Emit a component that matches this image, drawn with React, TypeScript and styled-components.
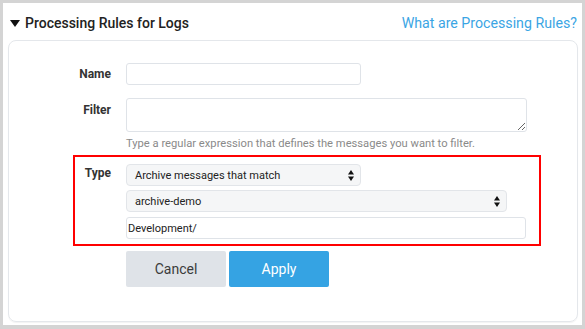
import React from 'react';
import styled, { createGlobalStyle } from 'styled-components';

// processing rules panel

const GlobalStyle = createGlobalStyle`
	html, body {
		margin: 0;
		padding: 0;
		background: #d4d4d4;
		font-family: Roboto, "Liberation Sans", Arial, sans-serif;
	}
`;

const Arrows = () => (
	<svg width="6" height="11" viewBox="0 0 6 11">
		<path d="M3 0 L6 4.5 L0 4.5 Z" fill="#111" />
		<path d="M0 6.5 L6 6.5 L3 11 Z" fill="#111" />
	</svg>
);

const App = () => {
	return (
		<React.Fragment>
			<GlobalStyle />
			<Panel>
				<Header>
					<Title>
						<Caret />
						Processing Rules for Logs
					</Title>
					<HelpLink href="#">What are Processing Rules?</HelpLink>
				</Header>
				<Card>
					<Row>
						<Label $top={1}>Name</Label>
						<TextInput $width={235} type="text" />
					</Row>
					<Row $gap={4}>
						<Label $top={2}>Filter</Label>
						<div>
							<TextArea />
							<Hint>Type a regular expression that defines the messages you want to filter.</Hint>
						</div>
					</Row>
					<Highlight>
						<Row $gap={0} $inset={0}>
							<Label $top={-1}>Type</Label>
							<Stack>
								<SelectBox $width={235}>
									<span>Archive messages that match</span>
									<Arrows />
								</SelectBox>
								<SelectBox $width={381}>
									<span>archive-demo</span>
									<Arrows />
								</SelectBox>
								<TextInput $width={400} $mt={1} type="text" defaultValue="Development/" />
							</Stack>
						</Row>
					</Highlight>
					<Buttons>
						<Button type="button">Cancel</Button>
						<Button type="button" $primary>
							Apply
						</Button>
					</Buttons>
				</Card>
			</Panel>
		</React.Fragment>
	);
};

export default App;

const Panel = styled.div`
	margin: 3px;
	width: 579px;
	height: 322px;
	box-sizing: border-box;
	background: #fff;
	padding: 0 4px 3px 5px;
	display: flex;
	flex-direction: column;
`;

const Header = styled.div`
	height: 37px;
	display: flex;
	align-items: center;
	justify-content: space-between;
	padding: 2px 0 0 2px;
	box-sizing: border-box;
`;

const Title = styled.div`
	display: flex;
	align-items: center;
	gap: 5px;
	font-size: 14px;
	font-weight: 500;
	color: #222;
`;

const Caret = styled.span`
	width: 0;
	height: 0;
	border-left: 5.5px solid transparent;
	border-right: 5.5px solid transparent;
	border-top: 7px solid #111;
	margin-top: 1px;
`;

const HelpLink = styled.a`
	font-size: 14.2px;
	color: #3aa5e4;
	text-decoration: none;
	margin-right: 1px;
`;

const Card = styled.div`
	flex: 1;
	border: 1px solid #e4e7eb;
	border-radius: 8px;
	box-shadow: 0 1px 1px rgba(0, 0, 0, 0.05);
	padding: 22px 0 0 66px;
	display: flex;
	flex-direction: column;
`;

const Row = styled.div<{ $gap?: number; $inset?: number }>`
	display: grid;
	grid-template-columns: 34px 1fr;
	column-gap: 15px;
	align-items: start;
	padding-left: ${(p) => (p.$inset ?? 2)}px;
	margin-bottom: ${(p) => (p.$gap ?? 13)}px;
`;

const Label = styled.label<{ $top: number }>`
	font-size: 12px;
	font-weight: 700;
	color: #333;
	text-align: right;
	line-height: 21px;
	white-space: nowrap;
	justify-self: end;
	margin-top: ${(p) => p.$top}px;
`;

const TextInput = styled.input<{ $width: number; $mt?: number }>`
	width: ${(p) => p.$width}px;
	height: 22px;
	box-sizing: border-box;
	border: 1px solid #dfe3e8;
	border-radius: 3px;
	background: #fff;
	padding: 0 1px;
	margin: ${(p) => p.$mt ?? 0}px 0 0;
	font-family: Roboto, "Liberation Sans", Arial, sans-serif;
	font-size: 11px;
	color: #222;
	outline: none;
`;

const TextArea = styled.textarea`
	display: block;
	width: 401px;
	height: 34px;
	box-sizing: border-box;
	border: 1px solid #dfe3e8;
	border-radius: 3px;
	margin: 0;
	resize: vertical;
	outline: none;
`;

const Hint = styled.div`
	margin-top: 5px;
	font-size: 11.2px;
	color: #8a8a8a;
	line-height: 14px;
`;

const Highlight = styled.div`
	align-self: flex-start;
	margin-left: -2px;
	border: 2px solid #ff0000;
	padding: 7px 13px 5px 2px;
`;

const Stack = styled.div`
	display: flex;
	flex-direction: column;
	gap: 4px;
`;

const SelectBox = styled.div<{ $width: number }>`
	width: ${(p) => p.$width}px;
	height: 22px;
	box-sizing: border-box;
	display: flex;
	align-items: center;
	justify-content: space-between;
	padding: 0 6px 0 8px;
	background: #f5f6f7;
	border: 1px solid #e2e5e9;
	border-radius: 4px;
	font-size: 11px;
	color: #222;
`;

const Buttons = styled.div`
	display: flex;
	gap: 3px;
	margin: 5px 0 0 51px;
`;

const Button = styled.button<{ $primary?: boolean }>`
	width: 100px;
	height: 36px;
	border: none;
	border-radius: 2px;
	font-family: Roboto, "Liberation Sans", Arial, sans-serif;
	font-size: 14px;
	cursor: pointer;
	background: ${(p) => (p.$primary ? '#35a3e3' : '#dfe3e8')};
	color: ${(p) => (p.$primary ? '#fff' : '#3b3b3b')};
`;
